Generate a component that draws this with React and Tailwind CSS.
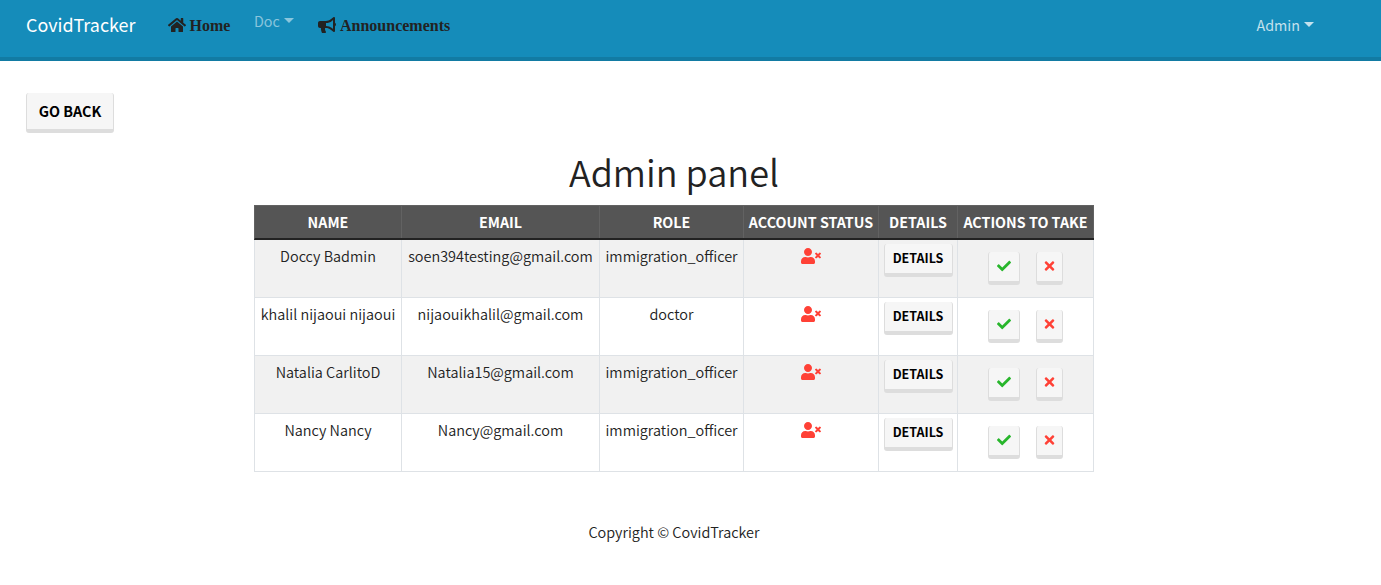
import React from "react";
import { FaHome, FaBullhorn, FaUserTimes, FaCheck, FaTimes } from "react-icons/fa";

const users = [
  { name: "Doccy Badmin", email: "soen394testing@gmail.com", role: "immigration_officer" },
  { name: "khalil nijaoui nijaoui", email: "nijaouikhalil@gmail.com", role: "doctor" },
  { name: "Natalia CarlitoD", email: "Natalia15@gmail.com", role: "immigration_officer" },
  { name: "Nancy Nancy", email: "Nancy@gmail.com", role: "immigration_officer" },
];

const headings = ["Name", "Email", "Role", "Account status", "Details", "Actions to take"];

const columns = "grid grid-cols-[147px_198px_144px_135px_79px_136px]";
const cell = "border-r border-[#dee2e6] pt-1 text-center";
const button =
  "flex items-center justify-center rounded-[3px] border-x border-b-4 border-[#dddddd] bg-[#f6f6f6] font-bold uppercase text-black";

function Caret() {
  return (
    <span className="mt-[9px] ml-1 h-0 w-0 border-x-[5px] border-t-[5px] border-x-transparent border-t-current" />
  );
}

function Navbar() {
  return (
    <nav className="flex h-[61px] items-start border-b-4 border-[#127ba3] bg-[#158cba] pl-[26px] pr-[67px]">
      <a className="mt-[9px] w-[142px] text-[17.92px] leading-[30px] text-white">CovidTracker</a>
      <a className="-ml-[0.5px] mt-[14px] flex w-[86.5px] items-center gap-1 font-['Liberation_Serif',serif] text-[16px] leading-6 font-bold text-[#222222]">
        <FaHome className="-mt-0.5 h-4 w-[18px]" />
        Home
      </a>
      <a className="mt-[9px] flex w-[64px] text-[14.34px] leading-6 text-white/50">
        Doc
        <Caret />
      </a>
      <a className="mt-[14px] flex items-center gap-1 font-['Liberation_Serif',serif] text-[16px] leading-6 font-bold text-[#222222]">
        <FaBullhorn className="-mt-0.5 h-4 w-[18px]" />
        Announcements
      </a>
      <a className="mt-[13px] ml-auto flex text-[14.34px] leading-6 text-white/75">
        Admin
        <Caret />
      </a>
    </nav>
  );
}

function UserRow({ user, striped }) {
  return (
    <div className={`${columns} h-[58px] border-b border-[#dee2e6] text-[14.45px] font-[350] ${striped ? "bg-[#f1f1f1]" : "bg-white"}`}>
      <div className={cell}>{user.name}</div>
      <div className={cell}>{user.email}</div>
      <div className={cell}>{user.role}</div>
      <div className="flex justify-center border-r border-[#dee2e6] pt-2 text-[#ff4136]">
        <FaUserTimes className="h-4 w-5" />
      </div>
      <div className="flex items-start justify-center border-r border-[#dee2e6] pt-1">
        <button className={`${button} h-[33px] w-[69px] pb-px text-[12.5px]`}>Details</button>
      </div>
      <div className="flex items-start gap-4 border-r border-[#dee2e6] pt-3 pl-[30px]">
        <button className={`${button} h-[33px] w-8 pb-0.5`}>
          <FaCheck className="size-[14px] text-[#28b62c]" />
        </button>
        <button className={`${button} h-[33px] w-[27px] pb-0.5`}>
          <FaTimes className="h-[14px] w-[11px] text-[#ff4136]" />
        </button>
      </div>
    </div>
  );
}

export default function App() {
  return (
    <div className="h-[585px] overflow-hidden bg-white font-['Noto_Sans_CJK_SC',sans-serif] text-[14.34px] leading-6 text-[#222222]">
      <Navbar />
      <main className="pt-8">
        <button className={`${button} ml-[26px] h-10 w-[88px] text-[14.34px]`}>Go back</button>
        <div className="ml-[254px] w-[840px]">
          <h1 className="mt-[14px] h-[58px] text-center text-[36.1px] leading-[48px] font-[350]">Admin panel</h1>
          <div className="border-l border-[#dee2e6]">
            <div className={`${columns} -ml-px h-[35px] border-t border-l border-b-2 border-t-[#626262] border-l-[#626262] border-b-[#222222] bg-[#555555]`}>
              {headings.map((heading) => (
                <div key={heading} className="border-r border-[#626262] pt-1 text-center text-[14.28px] font-bold text-white uppercase">
                  {heading}
                </div>
              ))}
            </div>
            {users.map((user, i) => (
              <UserRow key={user.name} user={user} striped={i % 2 === 0} />
            ))}
          </div>
          <footer className="mt-12 text-center text-[14.45px] font-[350]">Copyright © CovidTracker</footer>
        </div>
      </main>
    </div>
  );
}
